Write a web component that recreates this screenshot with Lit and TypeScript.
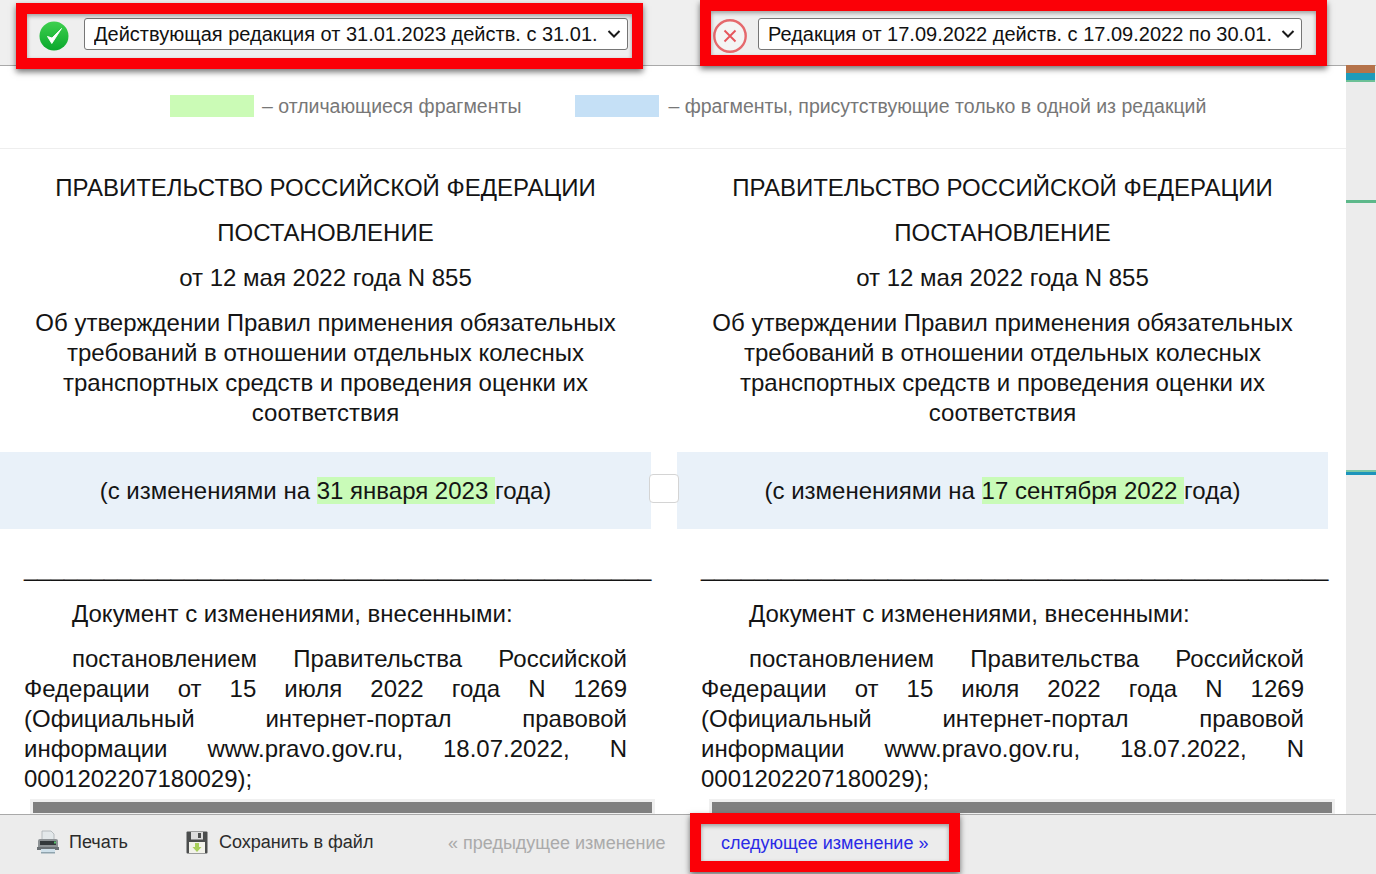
import { LitElement, html, css } from "lit";
import { customElement } from "lit/decorators.js";

@customElement("doc-column")
class DocColumn extends LitElement {
  static styles = css`
    :host { display: flex; flex-direction: column; height: 100%; font-family: "Liberation Sans", Arial, sans-serif; font-size: 24px; line-height: 30px; color: #141414; }
    .body { padding: 24px 24px 0 24px; }
    .c { text-align: center; margin: 0 0 15px; }
    .title { margin-bottom: 24px; }
    .band { background: #e9f1f9; height: 77px; display: flex; align-items: center; justify-content: center; padding-top: 1px; box-sizing: border-box; white-space: pre; }
    mark { background: #c9fbb8; color: inherit; }
    .rest { padding: 24px 0 0 24px; }
    .under { white-space: nowrap; width: 627px; margin: 0 0 16px; }
    .para { width: 603px; margin: 0 0 15px; text-align: justify; text-indent: 48px; }
    .para.last { margin-bottom: 5px; }
    .bar { margin-left: 6px; width: 619px; height: 11px; background: #808080; border: 3px solid #f0f0f0; border-bottom-width: 1px; }
    :host([right]) .bar { margin-left: 8px; width: 620px; }
  `;
  static properties = { date: {} };
  date = "";
  render() {
    return html`
      <div class="body">
        <p class="c">ПРАВИТЕЛЬСТВО РОССИЙСКОЙ ФЕДЕРАЦИИ</p>
        <p class="c">ПОСТАНОВЛЕНИЕ</p>
        <p class="c">от 12 мая 2022 года N 855</p>
        <p class="c title">Об утверждении Правил применения обязательных требований в отношении отдельных колесных транспортных средств и проведения оценки их соответствия</p>
      </div>
      <div class="band"><span>(с изменениями на <mark>${this.date} </mark>года)</span></div>
      <div class="rest">
        <p class="under">_______________________________________________</p>
        <p class="para">Документ с изменениями, внесенными:</p>
        <p class="para last">постановлением Правительства Российской Федерации от 15 июля 2022 года N 1269 (Официальный интернет-портал правовой информации www.pravo.gov.ru, 18.07.2022, N 0001202207180029);</p>
        <div class="bar"></div>
      </div>
    `;
  }
}

@customElement("app-root")
class AppRoot extends LitElement {
  static styles = css`
    :host { display: block; width: 1376px; height: 874px; overflow: hidden; position: relative; background: #fff; font-family: "Liberation Sans", Arial, sans-serif; }
    .page { display: flex; flex-direction: column; height: 874px; }
    .top { height: 65px; flex: none; background: #efefef; border-bottom: 1px solid #a9a9a9; display: grid; grid-template-columns: 677px 1fr; align-items: center; box-sizing: content-box; }
    .pick { display: flex; align-items: center; }
    .pick.a { padding-left: 39px; gap: 15px; }
    .pick.b { padding-left: 36px; gap: 11px; }
    .sel { position: relative; width: 544px; height: 32px; margin-top: 3px; }
    .pick.a svg.st, .pick.b svg.st { margin-top: 6px; }
    select { appearance: none; width: 100%; height: 100%; box-sizing: border-box; font: 20px "Liberation Sans", Arial, sans-serif; color: #111; background: #fff; border: 1px solid #767676; border-radius: 3px; padding: 0 0 0 9px; }
    .chev { position: absolute; right: 6px; top: 11px; pointer-events: none; }
    .middle { flex: none; height: 749px; display: grid; grid-template-columns: 1346px 30px; position: relative; z-index: 1; }
    .content { display: flex; flex-direction: column; min-height: 0; }
    .legend { flex: none; border-bottom: 1px solid #eee; display: flex; align-items: center; padding: 0 0 2px 170px; box-sizing: border-box; font-size: 19.5px; color: #777; height: 83px; }
    .swatch { width: 84px; height: 22px; margin-right: 8px; }
    .green { background: #cbfbb6; }
    .blue { background: #c5e0f6; margin-left: 54px; margin-right: 9px; }
    .cols { flex: 1; min-height: 0; display: grid; grid-template-columns: 651px 651px; column-gap: 26px; position: relative; }
    .sync { position: absolute; left: 649px; top: 325px; width: 30px; height: 29px; box-sizing: border-box; background: #fff; border: 1px solid #d4d4d4; border-radius: 4px; }
    .track { background: #ececec; height: 748px; position: relative; }
    .mark { position: absolute; left: 0; }
    .m1 { top: -1px; width: 29px; height: 8px; background: #b5734a; }
    .m2 { top: 7px; width: 29px; height: 7px; background: #1d9bbb; }
    .m3 { top: 14px; width: 29px; height: 2px; background: #6cc096; }
    .m4 { top: 134px; width: 30px; height: 3px; background: #5db88a; }
    .m5 { top: 404px; width: 30px; height: 2px; background: #7cc7a6; }
    .m6 { top: 406px; width: 30px; height: 3px; background: #1d94bb; }
    .foot { flex: 1; margin-top: -1px; background: #ececec; border-top: 1px solid #a9a9a9; display: flex; align-items: center; font-size: 18px; color: #2b2b2b; padding: 0 0 5px 36px; box-sizing: border-box; }
    .tool { display: flex; align-items: center; }
    .tool svg { flex: none; }
    .print { gap: 9px; width: 150px; }
    .save { gap: 11px; width: 262px; }
    .off { color: #aaa; width: 273px; padding-top: 2px; }
    .next { color: #2a2ae6; padding-top: 2px; }
    .frame { position: absolute; box-sizing: border-box; border: 11px solid #fb0007; z-index: 5; box-shadow: 0 3px 6px rgba(0,0,0,.55), inset 0 2px 4px rgba(0,0,0,.35); pointer-events: none; }
    .f1 { left: 16px; top: 3px; width: 627px; height: 66px; }
    .f2 { left: 700px; top: 0; width: 627px; height: 66px; }
    .f3 { left: 690px; top: 813px; width: 270px; height: 59px; }
  `;
  chev() {
    return html`<svg class="chev" width="16" height="10" viewBox="0 0 16 10"><path d="M2.5 2 L8 7.5 L13.5 2" fill="none" stroke="#1a1a1a" stroke-width="2"/></svg>`;
  }
  render() {
    return html`
      <div class="page">
        <header class="top">
          <div class="pick a">
            <svg class="st" width="30" height="30" viewBox="0 0 30 30">
              <defs><linearGradient id="g" x1="0" y1="0" x2="0" y2="1"><stop offset="0" stop-color="#3fd04f"/><stop offset="1" stop-color="#0aa82c"/></linearGradient></defs>
              <circle cx="15" cy="15" r="14.5" fill="url(#g)"/>
              <path d="M8.5 15.5 L12.8 22.5 L22.5 7.5 L13 17 Z" fill="#fff" stroke="#fff" stroke-width=".9" stroke-linejoin="round"/>
            </svg>
            <div class="sel"><select><option>Действующая редакция от 31.01.2023 действ. с 31.01.</option></select>${this.chev()}</div>
          </div>
          <div class="pick b">
            <svg class="st" width="34" height="34" viewBox="0 0 34 34">
              <circle cx="17" cy="17" r="15.7" fill="#f4f4f4" stroke="#e5686c" stroke-width="2.4"/>
              <path d="M11.5 11.5 L22.5 22.5 M22.5 11.5 L11.5 22.5" stroke="#e5555c" stroke-width="1.9" fill="none"/>
            </svg>
            <div class="sel"><select><option>Редакция от 17.09.2022 действ. с 17.09.2022 по 30.01.</option></select>${this.chev()}</div>
          </div>
        </header>
        <div class="middle">
          <div class="content">
            <div class="legend">
              <span class="swatch green"></span><span>– отличающиеся фрагменты</span>
              <span class="swatch blue"></span><span>– фрагменты, присутствующие только в одной из редакций</span>
            </div>
            <div class="cols">
              <doc-column date="31 января 2023"></doc-column>
              <doc-column right date="17 сентября 2022"></doc-column>
              <div class="sync"></div>
            </div>
          </div>
          <div class="track">
            <span class="mark m1"></span><span class="mark m2"></span><span class="mark m3"></span>
            <span class="mark m4"></span><span class="mark m5"></span><span class="mark m6"></span>
          </div>
        </div>
        <footer class="foot">
          <div class="tool print">
            <svg width="24" height="24" viewBox="0 0 24 24">
              <path d="M6 1 H15 L18 4 V10 H6 Z" fill="#e3e8ea" stroke="#a9b0b4" stroke-width=".8"/>
              <path d="M2 11 Q2 9 4 9 H20 Q22 9 22 11 V19 H2 Z" fill="#8c9194"/>
              <rect x="4" y="11" width="16" height="4" fill="#33383b"/>
              <rect x="18" y="11.5" width="2" height="2" fill="#56c46a"/>
              <path d="M1 17 H23 V20 H1 Z" fill="#6a7074"/>
              <rect x="5" y="19" width="14" height="4" fill="#cfe0ea"/>
              <rect x="5" y="22" width="14" height="1.5" fill="#8fa3ad"/>
            </svg>
            <span>Печать</span>
          </div>
          <div class="tool save">
            <svg width="22" height="23" viewBox="0 0 22 23">
              <rect x="0.5" y="0.5" width="21" height="22" rx="1" fill="#4b4d4d"/>
              <rect x="5" y="1" width="12" height="7.5" fill="#dcdcdc"/>
              <rect x="12" y="2" width="3" height="5" fill="#4b4d4d"/>
              <rect x="3" y="11" width="16" height="11" fill="#f2f2ea"/>
              <path d="M9 12 H13 V16 H15.5 L11 21 L6.5 16 H9 Z" fill="#a8cf5a"/>
            </svg>
            <span>Сохранить в файл</span>
          </div>
          <span class="off">« предыдущее изменение</span>
          <span class="next">следующее изменение »</span>
        </footer>
      </div>
      <div class="frame f1"></div>
      <div class="frame f2"></div>
      <div class="frame f3"></div>
    `;
  }
}
